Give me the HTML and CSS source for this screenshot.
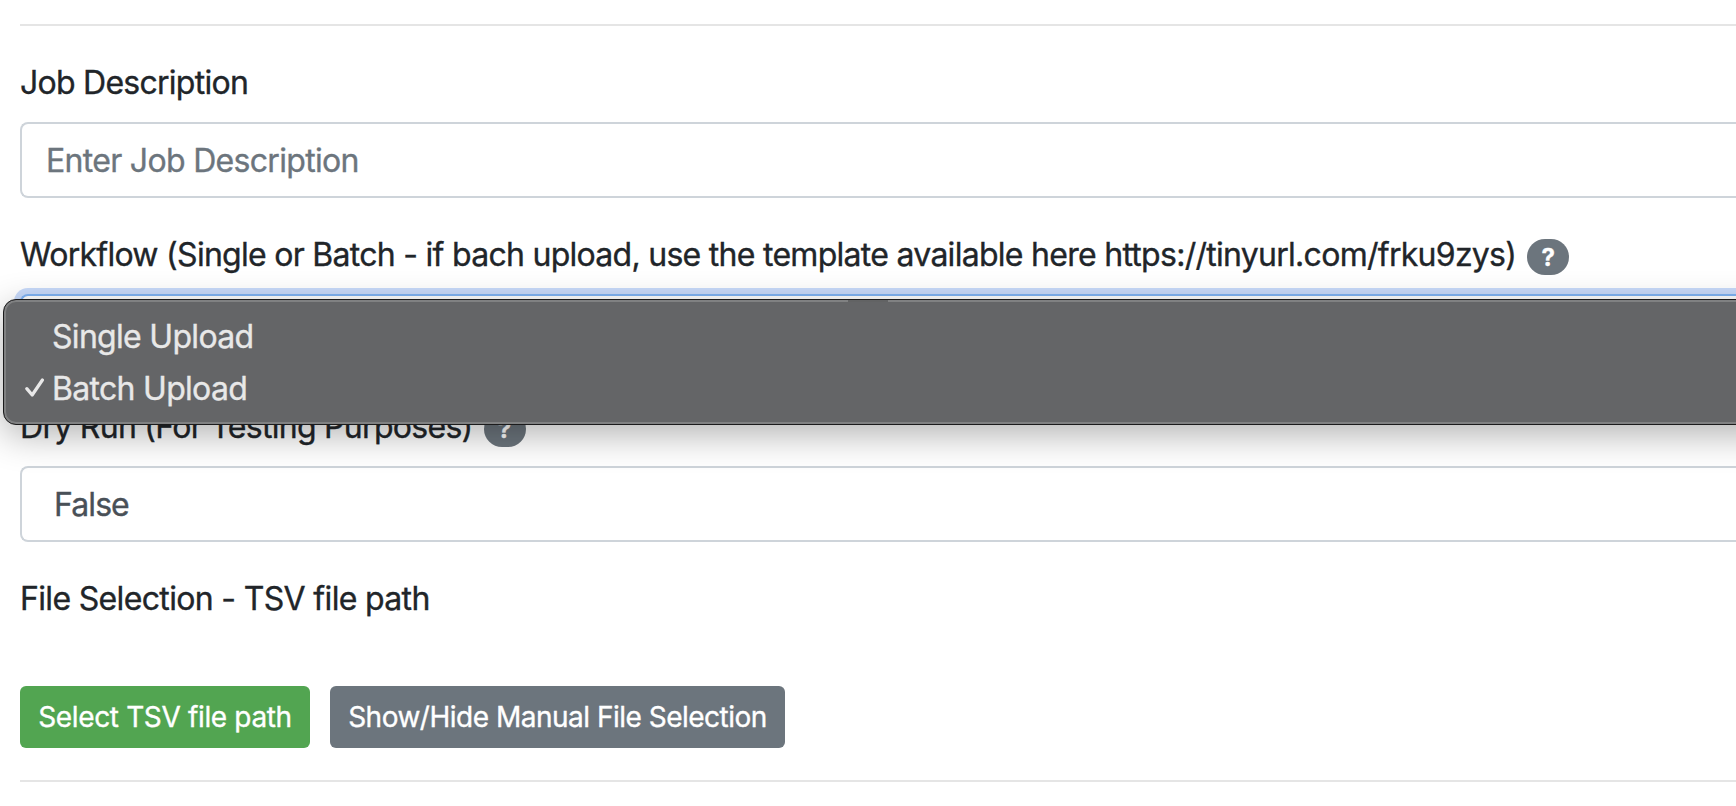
FILE: index.html
```html
<!DOCTYPE html>
<html lang="en">
<head>
<meta charset="utf-8">
<title>Job submission</title>
<link rel="stylesheet" href="styles.css">
</head>
<body>
<form class="job-form">
  <hr class="rule">
  <div class="group">
    <label class="label" for="job"><span class="label-text">Job Description</span></label>
    <input class="control" id="job" type="text" placeholder="Enter Job Description">
  </div>
  <div class="group">
    <label class="label"><span class="label-text label-workflow">Workflow (Single or Batch - if bach upload, use the template available here https://tinyurl.com/frku9zys)</span><span class="badge">?</span></label>
    <div class="select-wrap">
      <div class="control control-focus"></div>
      <div class="menu">
        <div class="option"><span class="check"></span><span>Single Upload</span></div>
        <div class="option"><span class="check"><svg width="20" height="20" viewBox="0 0 20 20"><path d="M1.8 10.6 L7.2 17 L17.4 2" fill="none" stroke="#e8e8e8" stroke-width="3.2" stroke-linecap="round" stroke-linejoin="round"/></svg></span><span>Batch Upload</span></div>
      </div>
    </div>
  </div>
  <div class="group">
    <label class="label"><span class="label-text label-dry">Dry Run (For Testing Purposes)</span><span class="badge">?</span></label>
    <div class="control control-select"><span class="value">False</span></div>
  </div>
  <div class="file-group">
    <div class="label"><span class="label-text label-file">File Selection - TSV file path</span></div>
    <div class="actions">
      <button class="btn btn-success" type="button">Select TSV file path</button>
      <button class="btn btn-secondary" type="button">Show/Hide Manual File Selection</button>
    </div>
  </div>
  <hr class="rule">
</form>
</body>
</html>
```
FILE: styles.css
```css
* { box-sizing: border-box; }
body {
  margin: 0;
  background: #fff;
  color: #212529;
  font: 32px/48px Inter, "Liberation Sans", sans-serif;
  letter-spacing: -0.74px;
  -webkit-text-stroke: 0.35px currentColor;
}
.job-form { height: 806px; padding: 24px 0 0 20px; overflow: hidden; }
.rule { height: 2px; margin: 0; border: 0; background: #e5e5e5; }
.group { margin-bottom: 32px; }
.rule + .group { margin-top: 32px; }
.label { display: flex; align-items: center; height: 48px; margin-bottom: 16px; white-space: nowrap; }
.label-text { padding-top: 2px; }
.label-workflow { letter-spacing: -0.72px; }
.label-dry { letter-spacing: -0.71px; }
.label-file { letter-spacing: -0.66px; }
.badge {
  width: 42px;
  height: 36px;
  margin: 6px 0 0 11px;
  border-radius: 18px;
  background: #6c757d;
  color: #fff;
  font-size: 24px;
  font-weight: 700;
  line-height: 37px;
  letter-spacing: 0;
  text-align: center;
}
.control {
  display: block;
  width: 100%;
  height: 76px;
  padding: 12px 24px;
  border: 2px solid #ced4da;
  border-right: 0;
  border-radius: 8px 0 0 8px;
  background: #fff;
  color: #495057;
  font: inherit;
  letter-spacing: -0.69px;
}
.control::placeholder { color: #6c757d; opacity: 1; }
.control-focus { border-color: #80b4f5; box-shadow: 0 0 0 6px #c8dafa; }
.control-select { padding: 13px 24px 11px 32px; }
.value { letter-spacing: -0.9px; }
.select-wrap { position: relative; }
.menu {
  position: absolute;
  z-index: 2;
  top: 5px;
  left: -17px;
  right: -60px;
  height: 126px;
  padding: 11px 0 0 19px;
  border: 1px solid #1b1b1c;
  border-radius: 13px;
  background: #646567;
  box-shadow: inset 0 0 0 2px #808182, 0 10px 36px rgba(0, 0, 0, .3);
  color: #e8e8e8;
  letter-spacing: -0.7px;
}
.menu::before {
  content: "";
  position: absolute;
  top: 0;
  left: 844px;
  width: 40px;
  height: 2px;
  background: #626364;
}
.option { display: flex; align-items: center; height: 52px; }
.check { display: flex; width: 29px; padding: 0 0 3px 2px; }
.file-group .label { margin-bottom: 64px; }
.actions { display: flex; gap: 20px; margin-bottom: 32px; }
.btn {
  height: 62px;
  padding: 0;
  border: 0;
  border-radius: 6px;
  color: #fff;
  font: 28px/62px Inter, "Liberation Sans", sans-serif;
  white-space: nowrap;
}
.btn-success { width: 290px; background: #52a551; letter-spacing: -0.35px; }
.btn-secondary { width: 455px; background: #6c757d; letter-spacing: -0.5px; }
```
